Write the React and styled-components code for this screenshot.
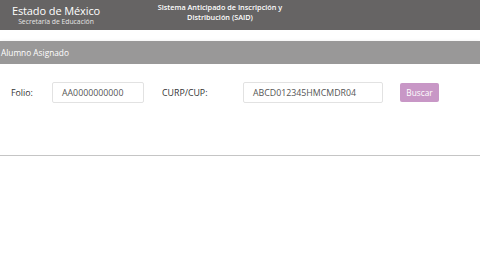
import React from "react";
import styled, { createGlobalStyle } from "styled-components";

const GlobalStyle = createGlobalStyle`
  body {
    margin: 0;
    background: #ffffff;
    font-family: "Open Sans", "Noto Sans", sans-serif;
  }
`;

const Header = styled.header`
  height: 30px;
  background-color: #666464;
  display: flex;
  align-items: center;
  color: #ffffff;
`;

const Brand = styled.div`
  width: 112px;
  display: flex;
  flex-direction: column;
  align-items: center;
  line-height: 1;
`;

const BrandTitle = styled.div`
  font-size: 11px;
  letter-spacing: -0.1px;
`;

const BrandSub = styled.div`
  font-size: 6.8px;
  margin-top: 3px;
  color: #e6e6e6;
`;

const SystemTitle = styled.div`
  width: 216px;
  text-align: center;
  font-size: 7.3px;
  font-weight: 600;
  line-height: 10px;
  margin-top: -6px;
`;

const Card = styled.section`
  position: relative;
  margin-top: 11px;
  background: #ffffff;
  height: 114px;
  border-bottom: 1px solid #dcdcdc;
  box-shadow: 0 3px 5px rgba(0, 0, 0, 0.35);

  &::after {
    content: "";
    position: absolute;
    left: 0;
    right: 0;
    top: 100%;
    height: 4px;
    background: linear-gradient(rgba(0, 0, 0, 0.12), rgba(0, 0, 0, 0));
  }
`;

const CardHeader = styled.div`
  height: 23px;
  background-color: #999898;
  color: #ffffff;
  font-size: 8.3px;
  display: flex;
  align-items: center;
  padding-left: 1px;
`;

const Row = styled.div`
  display: flex;
  align-items: center;
  margin-top: 18px;
  padding-left: 11px;
`;

const Label = styled.label`
  font-size: 8.8px;
  color: #333333;
  width: ${(p) => p.$width}px;
`;

const Field = styled.div`
  width: ${(p) => p.$width}px;
  height: 21px;
  box-sizing: border-box;
  border: 1px solid #e2e2e2;
  border-radius: 2px;
  font-size: 8.8px;
  color: #555555;
  display: flex;
  align-items: center;
  padding-left: 9px;
  margin-right: ${(p) => p.$gap}px;
`;

const Button = styled.button`
  width: 39px;
  height: 19px;
  border: none;
  border-radius: 2px;
  background-color: #c897c6;
  color: #ffffff;
  font-family: inherit;
  font-size: 8.3px;
  padding: 0;
`;

export default function App() {
  return (
    <>
      <GlobalStyle />
      <Header>
        <Brand>
          <BrandTitle>Estado de México</BrandTitle>
          <BrandSub>Secretaría de Educación</BrandSub>
        </Brand>
        <SystemTitle>
          Sistema Anticipado de Inscripción y
          <br />
          Distribución (SAID)
        </SystemTitle>
      </Header>
      <Card>
        <CardHeader>Alumno Asignado</CardHeader>
        <Row>
          <Label $width={41}>Folio:</Label>
          <Field $width={92} $gap={18}>AA0000000000</Field>
          <Label $width={81}>CURP/CUP:</Label>
          <Field $width={140} $gap={17}>ABCD012345HMCMDR04</Field>
          <Button>Buscar</Button>
        </Row>
      </Card>
    </>
  );
}
